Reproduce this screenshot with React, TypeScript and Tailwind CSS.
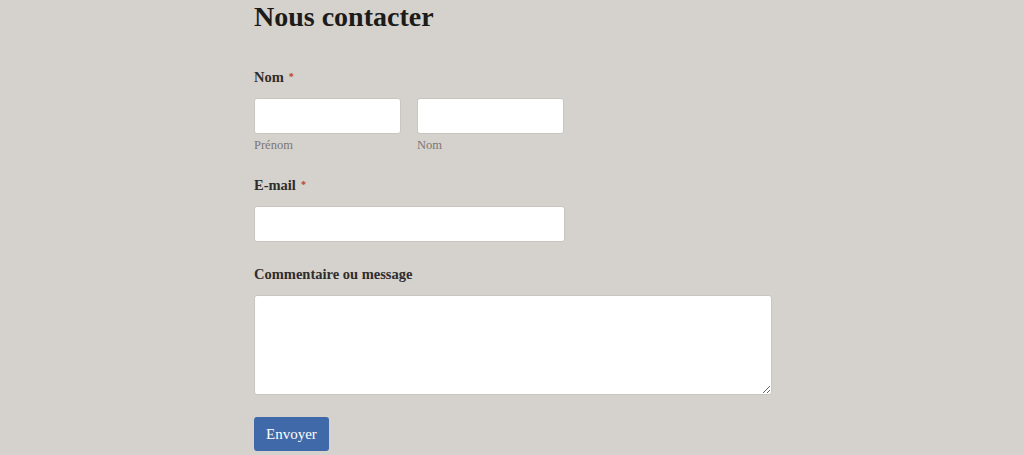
import React from 'react';

const font = { fontFamily: '"Liberation Serif", "DejaVu Serif", serif' };

const Required = () => <span className="ml-[5px] align-top text-[10px] text-[#c0392b]">*</span>;

const App: React.FC = () => {
  return (
    <div className="min-h-[455px] w-full bg-[#d5d1cc]" style={font}>
      <div className="ml-[254px] w-[518px] flex flex-col">
        <h1 className="text-[28px] leading-[34px] font-bold text-[#1c1b1a]">Nous contacter</h1>

        <label className="mt-[33px] text-[14.5px] leading-[20px] font-bold text-[#2e2d2c]">
          Nom<Required />
        </label>
        <div className="mt-[11px] flex gap-[16px]">
          <div className="flex flex-col">
            <input className="h-[36px] w-[147px] rounded-[3px] border border-[#c9c6c2] bg-white outline-none" />
            <span className="mt-[3px] text-[12.5px] leading-[16px] text-[#7b7875]">Prénom</span>
          </div>
          <div className="flex flex-col">
            <input className="h-[36px] w-[147px] rounded-[3px] border border-[#c9c6c2] bg-white outline-none" />
            <span className="mt-[3px] text-[12.5px] leading-[16px] text-[#7b7875]">Nom</span>
          </div>
        </div>

        <label className="mt-[22px] text-[14.5px] leading-[20px] font-bold text-[#2e2d2c]">
          E-mail<Required />
        </label>
        <input className="mt-[11px] h-[36px] w-[311px] rounded-[3px] border border-[#c9c6c2] bg-white outline-none" />

        <label className="mt-[22px] text-[14.5px] leading-[20px] font-bold text-[#2e2d2c]">
          Commentaire ou message
        </label>
        <textarea className="mt-[11px] h-[100px] w-[518px] rounded-[3px] border border-[#c9c6c2] bg-white outline-none" />

        <div className="mt-[22px] pb-[4px]">
          <button className="h-[34px] rounded-[3px] bg-[#4069a9] px-[12px] text-[15px] text-white" style={font}>
            Envoyer
          </button>
        </div>
      </div>
    </div>
  );
};

export default App;
